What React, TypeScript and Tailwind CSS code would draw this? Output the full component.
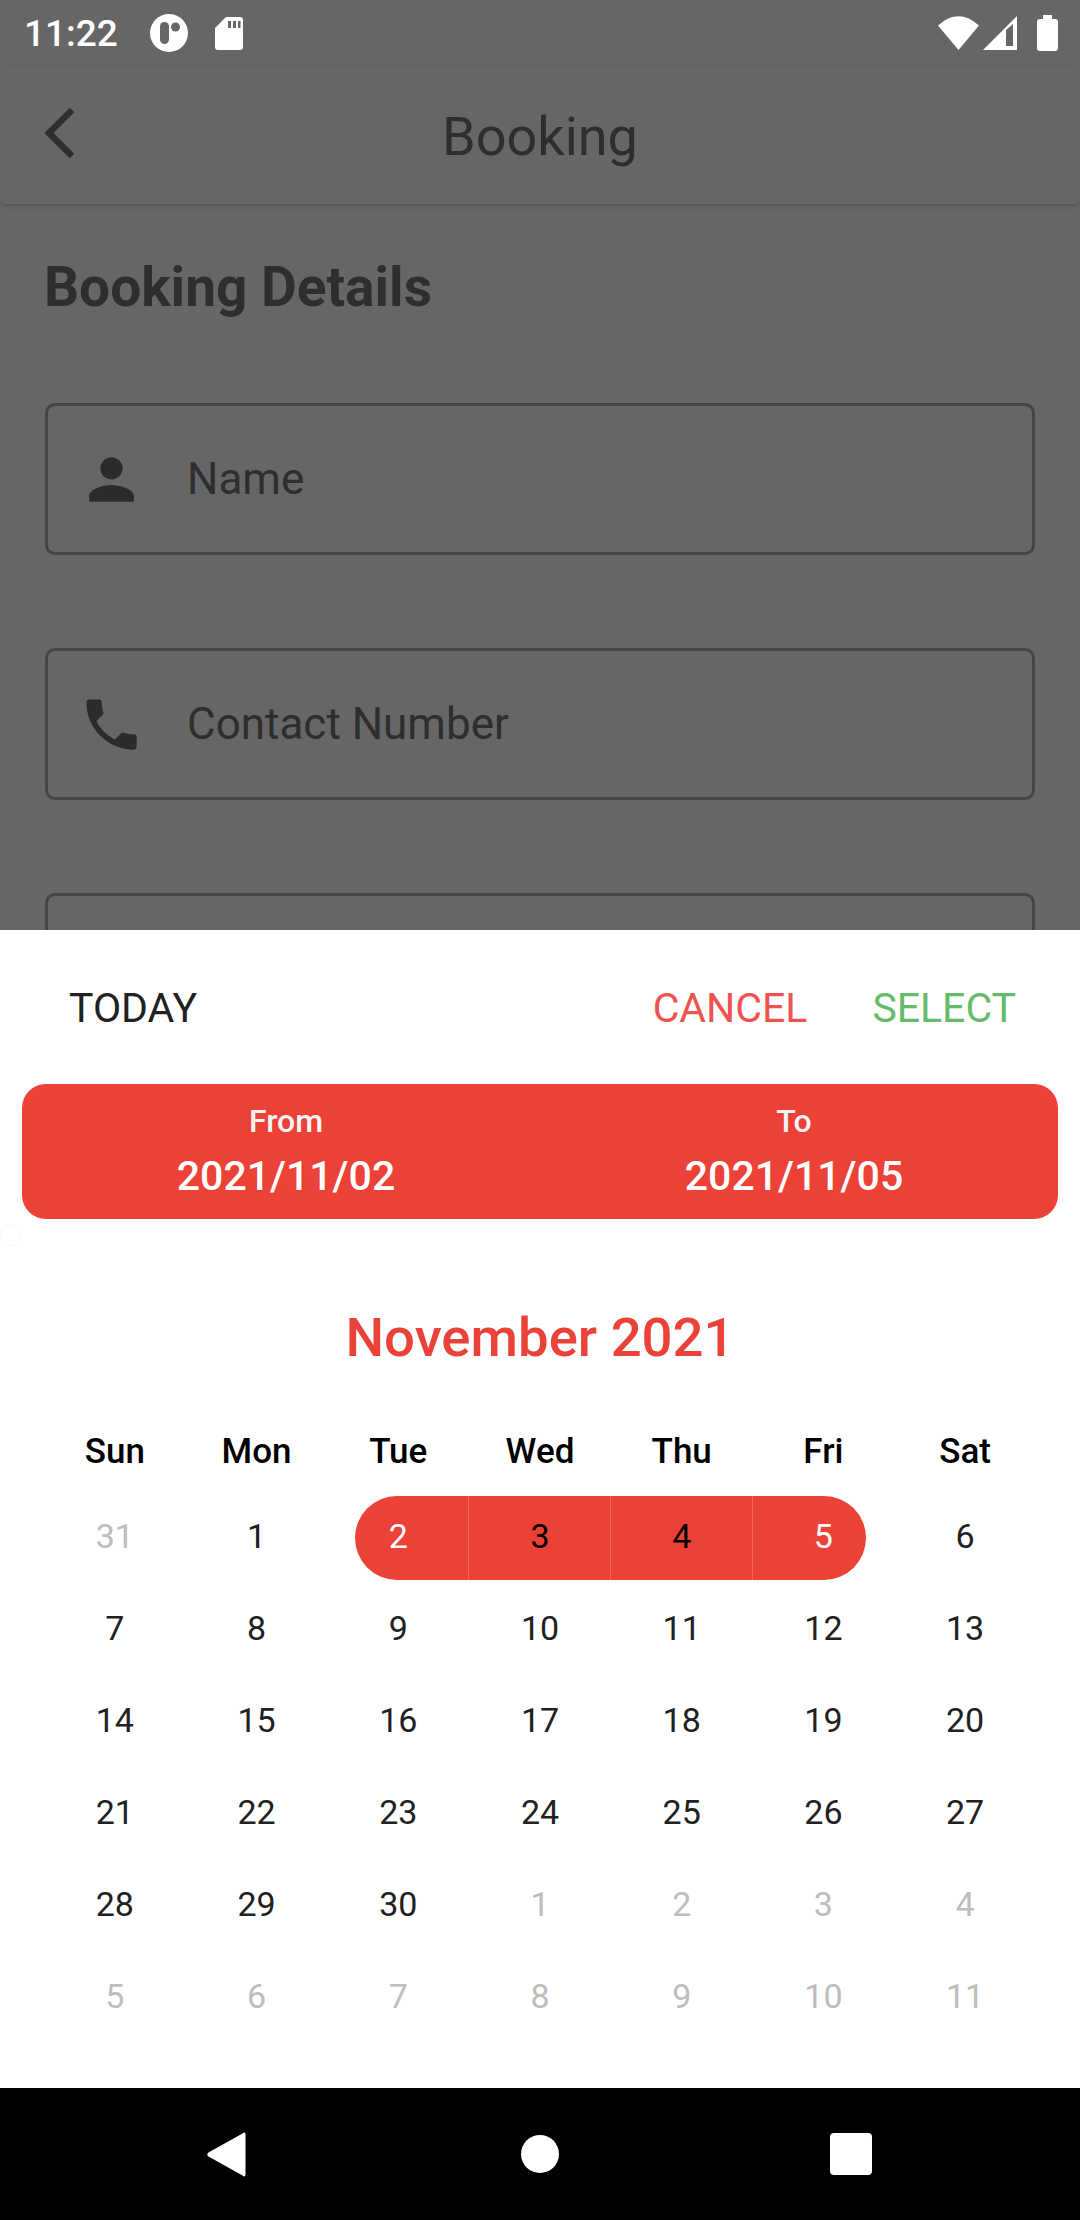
import React from "react";

const weekdays = ["Sun", "Mon", "Tue", "Wed", "Thu", "Fri", "Sat"];

type Day = { n: number; muted?: boolean };
const m = (n: number): Day => ({ n, muted: true });
const d = (n: number): Day => ({ n });

const days: Day[] = [
  m(31), d(1), d(2), d(3), d(4), d(5), d(6),
  d(7), d(8), d(9), d(10), d(11), d(12), d(13),
  d(14), d(15), d(16), d(17), d(18), d(19), d(20),
  d(21), d(22), d(23), d(24), d(25), d(26), d(27),
  d(28), d(29), d(30), m(1), m(2), m(3), m(4),
  m(5), m(6), m(7), m(8), m(9), m(10), m(11),
];

function StatusBar() {
  return (
    <div className="h-[66px] flex items-center pl-[24px] text-white">
      <span className="text-[37px] font-medium leading-none mt-[1px] w-[94px] whitespace-nowrap">11:22</span>
      <svg className="ml-[32px]" width="38" height="38" viewBox="0 0 38 38">
        <circle cx="19" cy="19" r="19" fill="#fff" />
        <rect x="10" y="8" width="9" height="22" rx="4.5" fill="#666" />
        <circle cx="25.5" cy="13" r="4.5" fill="#666" />
      </svg>
      <svg className="ml-[27px]" width="28" height="33" viewBox="0 0 28 33">
        <path d="M11 0H25a3 3 0 0 1 3 3V30a3 3 0 0 1-3 3H3a3 3 0 0 1-3-3V11Z" fill="#fff" />
        <rect x="13" y="4" width="3" height="7" fill="#666" />
        <rect x="18" y="4" width="3" height="7" fill="#666" />
        <rect x="23" y="4" width="2.5" height="7" fill="#666" />
      </svg>
      <div className="flex-1" />
      <svg width="41" height="34" viewBox="0 0 41 34">
        <path d="M0 9.5Q20.5 -9 41 9.5L20.5 34Z" fill="#fff" />
      </svg>
      <svg className="ml-[4px]" width="34" height="34" viewBox="0 0 34 34">
        <path d="M34 0V34H0Z" fill="#fff" />
        <path d="M23 14L30 8V30H23Z" fill="#666" />
      </svg>
      <svg className="ml-[20px] mr-[22px]" width="21" height="36" viewBox="0 0 21 36">
        <path d="M6 0H15V4H18a3 3 0 0 1 3 3V33a3 3 0 0 1-3 3H3a3 3 0 0 1-3-3V7a3 3 0 0 1 3-3H6Z" fill="#fff" />
      </svg>
    </div>
  );
}

function Field({ label, icon }: { label: string; icon: string }) {
  return (
    <div className="h-[152px] mb-[93px] mx-[45px] border-[3px] border-[#444444] rounded-[10px] flex items-center shrink-0">
      <svg className="ml-[30px] shrink-0" width="67" height="67" viewBox="0 0 24 24">
        <path d={icon} fill="#2b2b2b" />
      </svg>
      <span className="ml-[42px] text-[44px] leading-none text-[#2e2e2e] mt-[-1px]">{label}</span>
    </div>
  );
}

export default function App() {
  return (
    <div className="w-[1080px] h-[2220px] flex flex-col overflow-hidden bg-white [font-family:Roboto,sans-serif]">
      <div className="h-[930px] bg-[#666666] overflow-hidden shrink-0">
        <StatusBar />
        <div className="h-[138px] relative flex items-center justify-center rounded-[6px] shadow-[0_2px_5px_rgba(0,0,0,0.18)]">
          <svg className="absolute left-[40px] top-[38px]" width="40" height="62" viewBox="0 0 40 62">
            <path d="M32 6L9 29L32 52" fill="none" stroke="#2e2e2e" strokeWidth="6.5" />
          </svg>
          <span className="text-[54px] leading-none text-[#2e2e2e] mt-[3px]">Booking</span>
        </div>
        <div className="h-[199px] flex items-start pl-[44px] pt-[56px]">
          <span className="text-[55px] leading-none font-bold text-[#2e2e2e]">Booking Details</span>
        </div>
        <Field
          label="Name"
          icon="M12 12c2.21 0 4-1.79 4-4s-1.79-4-4-4-4 1.79-4 4 1.79 4 4 4zm0 2c-2.67 0-8 1.34-8 4v2h16v-2c0-2.66-5.33-4-8-4z"
        />
        <Field
          label="Contact Number"
          icon="M6.62 10.79c1.44 2.83 3.76 5.14 6.59 6.59l2.2-2.2c.27-.27.67-.36 1.02-.24 1.12.37 2.33.57 3.57.57.55 0 1 .45 1 1V20c0 .55-.45 1-1 1-9.39 0-17-7.61-17-17 0-.55.45-1 1-1h3.5c.55 0 1 .45 1 1 0 1.25.2 2.45.57 3.57.11.35.03.74-.25 1.02l-2.2 2.2z"
        />
        <div className="h-[152px] mx-[45px] border-[3px] border-[#444444] rounded-[10px]" />
      </div>

      <div className="h-[1158px] bg-white relative shrink-0">
        <div className="absolute left-0 top-[294px] w-[22px] h-[22px] rounded-full border border-[#f9f9f9]" />
        <div className="h-[154px] flex items-center pl-[69px] pr-[64px] text-[41px] font-[450] leading-none pt-[2px]">
          <span className="text-[#212121]">TODAY</span>
          <div className="flex-1" />
          <span className="text-[#ef5350]">CANCEL</span>
          <span className="ml-[65px] text-[#66bb6a]">SELECT</span>
        </div>

        <div className="mx-[22px] h-[135px] bg-[#ec4137] rounded-[24px] px-[10px] grid grid-cols-2 text-center text-white">
          {[
            ["From", "2021/11/02"],
            ["To", "2021/11/05"],
          ].map(([a, b]) => (
            <div key={a} className="flex flex-col items-center pt-[21px]">
              <span className="text-[32px] leading-[32px] text-[#f5f5f5] font-medium">{a}</span>
              <span className="text-[41px] leading-[42px] mt-[18px] font-medium">{b}</span>
            </div>
          ))}
        </div>

        <div className="mt-[79px] h-[80px] flex items-center justify-center text-[54.5px] font-medium text-[#ea4138]">
          November 2021
        </div>

        <div className="mt-[48px] mx-[44px] h-[50px] grid grid-cols-7 items-center text-center text-[35px] font-medium text-black">
          {weekdays.map((w) => (
            <span key={w}>{w}</span>
          ))}
        </div>

        <div className="mt-[14px] mx-[44px] grid grid-cols-7">
          {days.map((day, i) => {
            const sel = i >= 2 && i <= 5;
            const first = i === 2;
            const last = i === 5;
            const white = first || last;
            return (
              <div key={i} className="h-[92px] flex items-center justify-center relative">
                {sel && (
                  <div
                    className={
                      first
                        ? "absolute top-[6px] bottom-[2px] left-[28px] right-0 bg-[#ec4137] rounded-l-full border-r border-[#f0675e]"
                        : last
                        ? "absolute top-[6px] bottom-[2px] left-0 right-[28px] bg-[#ec4137] rounded-r-full"
                        : "absolute top-[6px] bottom-[2px] inset-x-0 bg-[#ec4137] border-r border-[#f0675e]"
                    }
                  />
                )}
                <span
                  className={
                    "relative text-[34px] leading-none " +
                    (day.muted
                      ? "text-[#bdbdbd]"
                      : white
                      ? "text-white"
                      : sel
                      ? "text-black"
                      : "text-[#212121]")
                  }
                >
                  {day.n}
                </span>
              </div>
            );
          })}
        </div>
      </div>

      <div className="h-[132px] bg-black flex items-center pl-[207px] shrink-0">
        <svg width="39" height="45" viewBox="0 0 39 45">
          <path d="M35.5 1.5Q38.5 -1 38.5 3V42Q38.5 46 35.5 43.5L1.5 24.5Q-1 22.5 1.5 20.5Z" fill="#fff" />
        </svg>
        <div className="ml-[275px] w-[38px] h-[38px] rounded-full bg-white" />
        <div className="ml-[271px] w-[42px] h-[42px] rounded-[4px] bg-white" />
      </div>
    </div>
  );
}
